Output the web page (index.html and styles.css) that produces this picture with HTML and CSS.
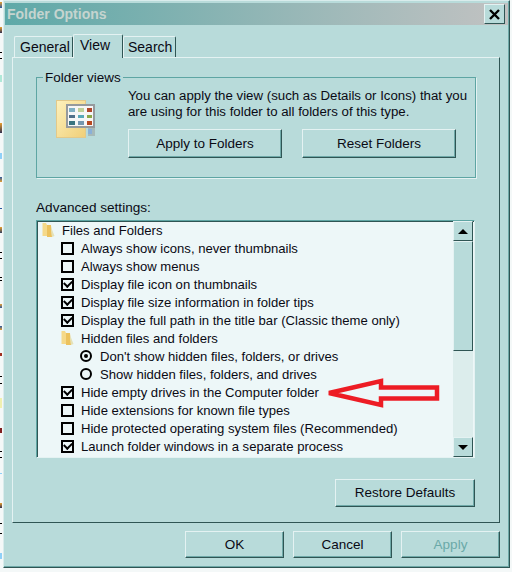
FILE: index.html
```html
<!DOCTYPE html>
<html lang="en">
<head>
  <meta charset="UTF-8">
  <title>Folder Options</title>
  <link rel="stylesheet" href="styles.css">
</head>
<body>

<div class="dialog">

  <div class="titlebar">
    <span class="title">Folder Options</span>
    <button class="closeButton">
      <svg width="11" height="11" viewBox="0 0 11 11"><path d="M1 1 L10 10 M10 1 L1 10" stroke="#000" stroke-width="2.4" fill="none"/></svg>
    </button>
  </div>

  <div class="tabs">
    <div class="tab">General</div>
    <div class="tab active">View</div>
    <div class="tab search">Search</div>
  </div>

  <div class="panel">

    <fieldset class="folderViews">
      <legend>Folder views</legend>
      <div class="viewsContent">
        <div class="viewsIcon">
          <svg width="44" height="40" viewBox="0 0 44 40">
            <defs>
              <linearGradient id="folderFill" x1="0" y1="0" x2="1" y2="1">
                <stop offset="0" stop-color="#fdf1bc"/>
                <stop offset="1" stop-color="#f0cf78"/>
              </linearGradient>
            </defs>
            <rect x="0.5" y="0.5" width="29" height="37" fill="url(#folderFill)" stroke="#e2c98a"/>
            <rect x="32" y="28" width="7" height="8" fill="#9aa3a3" opacity="0.6"/>
            <rect x="11" y="5" width="27" height="22" fill="#f6f6f6" stroke="#959a9d" stroke-width="2"/>
            <rect x="13" y="8" width="6" height="4" fill="#7fb0c4"/>
            <rect x="22" y="8" width="6" height="4" fill="#bfd098"/>
            <rect x="31" y="8" width="5" height="4" fill="#b0472a"/>
            <rect x="13" y="15" width="6" height="3" fill="#50708a"/>
            <rect x="22" y="15" width="6" height="3" fill="#58a8b8"/>
            <rect x="31" y="15" width="5" height="3" fill="#8aa848"/>
            <rect x="13" y="21" width="6" height="4" fill="#3a7480"/>
            <rect x="22" y="21" width="6" height="4" fill="#7498b0"/>
            <rect x="31" y="21" width="5" height="4" fill="#b84820"/>
            <rect x="32" y="29" width="4" height="5" fill="#8ab0d8"/>
          </svg>
        </div>
        <div class="viewsBody">
          <p>You can apply the view (such as Details or Icons) that you are using for this folder to all folders of this type.</p>
          <div class="viewsButtons">
            <button class="btn wide">Apply to Folders</button>
            <button class="btn wide">Reset Folders</button>
          </div>
        </div>
      </div>
    </fieldset>

    <div class="advancedLabel">Advanced settings:</div>

    <div class="listBox">
      <div class="rows">
        <div class="row"><svg class="folder" width="13" height="16" viewBox="0 0 13 16"><path d="M0.5 1 H4 L5 3 V14 H0.5 Z" fill="#f5d98a"/><path d="M5 3 H9 L10 15 H5 Z" fill="#ecc25e"/><path d="M9 5 L12.5 14 L10 15 Z" fill="#e4e2b8"/></svg><span>Files and Folders</span></div>
        <div class="row indent1"><i class="check"></i><span>Always show icons, never thumbnails</span></div>
        <div class="row indent1"><i class="check"></i><span>Always show menus</span></div>
        <div class="row indent1"><i class="check on"></i><span>Display file icon on thumbnails</span></div>
        <div class="row indent1"><i class="check on"></i><span>Display file size information in folder tips</span></div>
        <div class="row indent1"><i class="check on"></i><span>Display the full path in the title bar (Classic theme only)</span></div>
        <div class="row indent1"><svg class="folder" width="13" height="16" viewBox="0 0 13 16"><path d="M0.5 1 H4 L5 3 V14 H0.5 Z" fill="#f5d98a"/><path d="M5 3 H9 L10 15 H5 Z" fill="#ecc25e"/><path d="M9 5 L12.5 14 L10 15 Z" fill="#e4e2b8"/></svg><span>Hidden files and folders</span></div>
        <div class="row indent2"><i class="radio on"></i><span>Don't show hidden files, folders, or drives</span></div>
        <div class="row indent2"><i class="radio"></i><span>Show hidden files, folders, and drives</span></div>
        <div class="row indent1"><i class="check on"></i><span>Hide empty drives in the Computer folder</span></div>
        <div class="row indent1"><i class="check"></i><span>Hide extensions for known file types</span></div>
        <div class="row indent1"><i class="check"></i><span>Hide protected operating system files (Recommended)</span></div>
        <div class="row indent1"><i class="check on"></i><span>Launch folder windows in a separate process</span></div>
      </div>
      <div class="scrollbar">
        <div class="scrollButton"><b class="arrowUp"></b></div>
        <div class="thumb"></div>
        <div class="track"></div>
        <div class="scrollButton"><b class="arrowDown"></b></div>
      </div>
    </div>

    <div class="restoreRow">
      <button class="btn restore">Restore Defaults</button>
    </div>

  </div>

  <div class="footer">
    <button class="btn action">OK</button>
    <button class="btn action">Cancel</button>
    <button class="btn action disabled">Apply</button>
  </div>

  <!-- annotation drawn over the list -->
  <svg class="redArrow" width="122" height="36" viewBox="0 0 122 36">
    <path d="M9 18 L61 6 V12.5 H117 V23.5 H61 V30 Z" fill="none" stroke="#ed1c24" stroke-width="4.5"/>
  </svg>

</div>

</body>
</html>
```

FILE: styles.css
```css
* {
  box-sizing: border-box;
}
html, body {
  margin: 0;
  padding: 0;
}
body {
  width: 512px;
  height: 572px;
  font-family: "Liberation Sans", Arial, sans-serif;
  font-size: 13.1px;
  color: #0a0a14;
  overflow: hidden;
  /* scraps of the desktop showing down the left edge */
  background-color: #f4f8f8;
  background-repeat: no-repeat;
  background-size: 2px 572px;
  background-image: linear-gradient(to bottom,
    #f4f8f8 2px, #e8a030 2px, #2a5aa0 8px, #f4f8f8 8px,
    #f4f8f8 27px, #e8a030 27px, #303050 33px, #f4f8f8 33px,
    #f4f8f8 52px, #000 52px, #000 53px, #f4f8f8 53px,
    #f4f8f8 58px, #000 58px, #000 59px, #f4f8f8 59px,
    #f4f8f8 75px, #b0e8d8 75px, #b0e8d8 82px, #f4f8f8 82px,
    #f4f8f8 123px, #e8a030 123px, #303050 133px, #f4f8f8 133px,
    #f4f8f8 153px, #8fd0f8 153px, #8fd0f8 159px, #f4f8f8 159px,
    #f4f8f8 177px, #2a5aa0 177px, #e8a030 182px, #f4f8f8 182px,
    #f4f8f8 208px, #2a5aa0 208px, #2a5aa0 209px, #f4f8f8 209px,
    #f4f8f8 227px, #e8a030 227px, #304060 233px, #f4f8f8 233px,
    #f4f8f8 252px, #000 252px, #000 253px, #f4f8f8 253px,
    #f4f8f8 258px, #000 258px, #000 259px, #f4f8f8 259px,
    #f4f8f8 277px, #000 277px, #000 278px, #f4f8f8 278px,
    #f4f8f8 280px, #000 280px, #000 281px, #f4f8f8 281px,
    #f4f8f8 304px, #e8a030 304px, #2a5aa0 308px, #f4f8f8 308px,
    #f4f8f8 326px, #2a5aa0 326px, #e8a030 330px, #f4f8f8 330px,
    #f4f8f8 353px, #a03020 353px, #a03020 356px, #f4f8f8 356px,
    #f4f8f8 376px, #000 376px, #000 377px, #f4f8f8 377px,
    #f4f8f8 383px, #000 383px, #000 384px, #f4f8f8 384px,
    #f4f8f8 398px, #f0f0b0 398px, #f0f0b0 408px, #f4f8f8 408px,
    #f4f8f8 428px, #802020 428px, #802020 433px, #f4f8f8 433px,
    #f4f8f8 451px, #000 451px, #000 452px, #f4f8f8 452px,
    #f4f8f8 457px, #000 457px, #000 458px, #f4f8f8 458px,
    #f4f8f8 473px, #8fd0f8 473px, #8fd0f8 474px, #f4f8f8 474px,
    #f4f8f8 503px, #e8a030 503px, #303050 508px, #f4f8f8 508px,
    #f4f8f8 523px, #000 523px, #000 524px, #f4f8f8 524px,
    #f4f8f8 533px, #000 533px, #000 534px, #f4f8f8 534px,
    #f4f8f8 553px, #8fd0f8 553px, #8fd0f8 559px, #f4f8f8 559px);
}
button {
  font-family: inherit;
  font-size: 13.5px;
  color: inherit;
  padding: 0;
}
.dialog {
  position: relative;
  width: 507px;
  height: 568px;
  margin-left: 3px;
  background: #b8dbda;
  border: 1px solid #d9ecec;
  border-right-color: #2f5554;
  border-bottom-color: #2f5554;
  padding: 2px 1px 0 1px;
  box-shadow: inset -1px -1px 0 #6fa9a8;
}
.titlebar {
  display: flex;
  align-items: center;
  justify-content: space-between;
  height: 22px;
  padding: 0 3px 0 2px;
  background: linear-gradient(to right, #5ea9a8, #c2c2c2);
}
.title {
  font-size: 14px;
  font-weight: bold;
  color: #c5d4cf;
}
.closeButton {
  display: flex;
  align-items: center;
  justify-content: center;
  width: 21px;
  height: 20px;
  background: #b8dbda;
  border: 1px solid;
  border-color: #e4f2f2 #2f5554 #2f5554 #e4f2f2;
}
.tabs {
  display: flex;
  align-items: flex-end;
  height: 32px;
  padding-left: 9px;
}
.tab {
  width: 59px;
  height: 21px;
  padding: 2px 0 0 5px;
  font-size: 14px;
  line-height: 16px;
  border: 1px solid;
  border-color: #e4f2f2 #2f5554 transparent #e4f2f2;
  border-bottom: 0;
  border-radius: 2px 2px 0 0;
}
.tab.active {
  position: relative;
  z-index: 1;
  width: 50px;
  height: 24px;
  margin-bottom: -1px;
  padding-left: 6px;
  background: #b8dbda;
}
.tab.search {
  width: 53px;
  padding-left: 4px;
}
.panel {
  width: 488px;
  height: 466px;
  margin-left: 7px;
  padding: 10px 23px 0 23px;
  border: 1px solid;
  border-color: #e4f2f2 #2f5554 #2f5554 #e4f2f2;
}
.folderViews {
  height: 110px;
  margin: 0;
  padding: 0;
  border: 1px solid #5ea5a3;
  box-shadow: 1px 1px 0 #e4f2f2;
}
.folderViews legend {
  margin-left: 6px;
  padding: 2px 2px 0;
  font-size: 13.5px;
  line-height: 16px;
}
.viewsContent {
  display: flex;
}
.viewsIcon {
  flex: none;
  width: 91px;
  padding: 14px 0 0 19px;
}
.viewsBody {
  padding-top: 2px;
}
.viewsBody p {
  margin: 0;
  width: 345px;
  line-height: 16px;
  font-size: 13.25px;
}
.viewsButtons {
  display: flex;
  gap: 20px;
  margin-top: 9px;
}
.btn {
  background: #b8dbda;
  border: 1px solid;
  border-color: #e4f2f2 #2f5554 #2f5554 #e4f2f2;
  box-shadow: inset -1px -1px 0 #6fa9a8;
}
.btn.wide {
  width: 154px;
  height: 29px;
}
.advancedLabel {
  margin-top: 22px;
  line-height: 16px;
  font-size: 13.6px;
}
.listBox {
  display: flex;
  height: 238px;
  width: 439px;
  margin-top: 4px;
  background: #edf7f8;
  border: 1px solid;
  border-color: #5ea5a3 #e4f2f2 #e4f2f2 #5ea5a3;
  box-shadow: inset 1px 1px 0 #2f5554;
  overflow: hidden;
}
.rows {
  flex: 1;
  padding: 0 0 0 5px;
}
.row {
  display: flex;
  align-items: center;
  height: 18px;
  white-space: nowrap;
}
.row.indent1 {
  padding-left: 19px;
}
.row.indent2 {
  padding-left: 38px;
}
.row .folder {
  margin-right: 7px;
}
.check {
  position: relative;
  flex: none;
  width: 13px;
  height: 13px;
  margin-right: 7px;
  border: 2px solid #000;
  background: #edf7f8;
}
.check.on::after {
  content: "";
  position: absolute;
  left: 1px;
  top: 0;
  width: 6px;
  height: 4px;
  border-left: 2px solid #000;
  border-bottom: 2px solid #000;
  transform: rotate(-45deg);
}
.radio {
  position: relative;
  flex: none;
  width: 12px;
  height: 12px;
  margin-right: 8px;
  border: 2px solid #000;
  border-radius: 50%;
}
.radio.on::after {
  content: "";
  position: absolute;
  left: 2px;
  top: 2px;
  width: 4px;
  height: 4px;
  border-radius: 50%;
  background: #000;
}
.scrollbar {
  display: flex;
  flex-direction: column;
  flex: none;
  width: 20px;
  margin-right: 1px;
  background: #dcedec;
}
.scrollButton {
  display: flex;
  align-items: center;
  justify-content: center;
  height: 20px;
  background: #b8dbda;
  border: 1px solid;
  border-color: #e4f2f2 #2f5554 #2f5554 #e4f2f2;
}
.thumb {
  height: 110px;
  background: #b8dbda;
  border: 1px solid;
  border-color: #e4f2f2 #2f5554 #2f5554 #e4f2f2;
}
.track {
  flex: 1;
}
.arrowUp {
  border: 5px solid transparent;
  border-top: 0;
  border-bottom: 5px solid #000;
}
.arrowDown {
  border: 5px solid transparent;
  border-bottom: 0;
  border-top: 5px solid #000;
}
.restoreRow {
  display: flex;
  justify-content: flex-end;
  width: 439px;
  margin-top: 21px;
}
.btn.restore {
  width: 140px;
  height: 28px;
  padding-bottom: 2px;
}
.footer {
  display: flex;
  justify-content: flex-end;
  gap: 9px;
  width: 495px;
  margin-top: 8px;
}
.btn.action {
  width: 99px;
  height: 27px;
}
.btn.disabled {
  color: #6aa9a8;
}
.redArrow {
  position: absolute;
  left: 316px;
  top: 374px;
}
```
